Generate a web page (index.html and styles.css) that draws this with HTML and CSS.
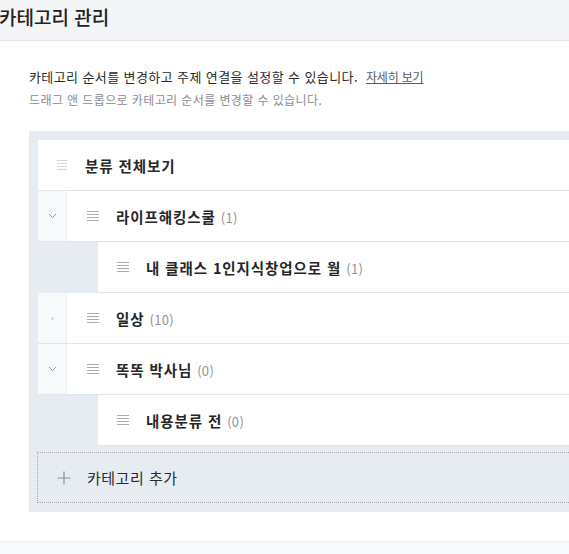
FILE: index.html
```html
<!DOCTYPE html>
<html lang="ko">
<head>
    <meta charset="UTF-8">
    <meta name="viewport" content="width=device-width, initial-scale=1.0">
    <title>카테고리 관리</title>
    <link rel="stylesheet" href="styles.css">
</head>
<body>
    <header class="page-head">
        <h1>카테고리 관리</h1>
    </header>

    <section class="intro">
        <p class="intro-main">카테고리 순서를 변경하고 주제 연결을 설정할 수 있습니다. <a href="#" class="more">자세히 보기</a></p>
        <p class="intro-sub">드래그 앤 드롭으로 카테고리 순서를 변경할 수 있습니다.</p>
    </section>

    <div class="board">
        <ul class="cat-list">
            <li class="cat-row is-root">
                <span class="drag is-off"><i></i><i></i><i></i><i></i></span>
                <span class="cat-name">분류 전체보기</span>
            </li>
            <li class="cat-row">
                <span class="toggle">
                    <svg width="9" height="6" viewBox="0 0 9 6"><polyline points="1,1 4.5,4.5 8,1" fill="none" stroke="#9a9fa6" stroke-width="1"/></svg>
                </span>
                <span class="drag"><i></i><i></i><i></i><i></i></span>
                <span class="cat-name">라이프해킹스쿨<em>(1)</em></span>
            </li>
            <li class="cat-row is-child">
                <span class="drag"><i></i><i></i><i></i><i></i></span>
                <span class="cat-name">내 클래스 1인지식창업으로 월<em>(1)</em></span>
            </li>
            <li class="cat-row">
                <span class="toggle"><b class="dot"></b></span>
                <span class="drag"><i></i><i></i><i></i><i></i></span>
                <span class="cat-name">일상<em>(10)</em></span>
            </li>
            <li class="cat-row">
                <span class="toggle">
                    <svg width="9" height="6" viewBox="0 0 9 6"><polyline points="1,1 4.5,4.5 8,1" fill="none" stroke="#9a9fa6" stroke-width="1"/></svg>
                </span>
                <span class="drag"><i></i><i></i><i></i><i></i></span>
                <span class="cat-name">똑똑 박사님<em>(0)</em></span>
            </li>
            <li class="cat-row is-child">
                <span class="drag"><i></i><i></i><i></i><i></i></span>
                <span class="cat-name">내용분류 전<em>(0)</em></span>
            </li>
        </ul>

        <button class="add-row" type="button">
            <svg width="14" height="14" viewBox="0 0 14 14"><path d="M7 0.5v13M0.5 7h13" stroke="#8c9096" stroke-width="1.2"/></svg>
            <span>카테고리 추가</span>
        </button>
    </div>

    <footer class="page-foot"></footer>
</body>
</html>
```

FILE: styles.css
```css
:root {
    --text: #222222;
    --muted: #8a8d92;
    --line: #e1e5eb;
    --board-bg: #e7ebf2;
}

body {
    margin: 0;
    font-family: "Noto Sans CJK KR", "Noto Sans", sans-serif;
    color: var(--text);
    background: #ffffff;
    overflow: hidden;
}

/* 상단 제목 */
.page-head {
    height: 41px;
    background: #f4f5f7;
    border-bottom: 1px solid #e3e6ec;
    box-sizing: border-box;
}

.page-head h1 {
    margin: 0;
    margin-left: -1px;
    font-size: 19px;
    font-weight: 500;
    line-height: 34px;
    letter-spacing: 0;
}

/* 안내 문구 */
.intro {
    padding: 25px 0 0 29px;
}

.intro p {
    margin: 0;
    letter-spacing: 0.4px;
}

.intro-main {
    font-size: 13px;
    line-height: 22px;
    color: #2b2b2b;
}

.intro-sub {
    margin-top: 1px;
    font-size: 12px;
    line-height: 24px;
    color: var(--muted);
}

.more {
    margin-left: 4px;
    font-size: 12px;
    letter-spacing: -0.2px;
    color: #555a60;
    text-decoration: underline;
}

/* 카테고리 목록 */
.board {
    margin: 19px -40px 0 29px;
    padding: 9px 0 9px 9px;
    background: var(--board-bg);
}

.cat-list {
    list-style: none;
    margin: 0;
    padding: 0;
}

.cat-row {
    display: flex;
    align-items: center;
    height: 51px;
    box-sizing: border-box;
    background: #ffffff;
    border-bottom: 1px solid var(--line);
}

.cat-row.is-root,
.cat-row.is-child {
    padding-left: 19px;
}

.cat-row.is-child {
    margin-left: 60px;
}

.toggle {
    display: flex;
    align-items: center;
    justify-content: center;
    align-self: stretch;
    flex: none;
    width: 28px;
    margin-right: 20px;
    background: #f8f9fb;
    border-right: 1px solid #eceef2;
}

.dot {
    width: 3px;
    height: 3px;
    border-radius: 50%;
    background: #d4d7dc;
}

.drag {
    display: flex;
    flex-direction: column;
    flex: none;
    gap: 2px;
    width: 12px;
    margin-right: 17px;
}

.drag i {
    display: block;
    height: 1px;
    background: #a9acb1;
}

.drag.is-off {
    width: 10px;
    margin-right: 18px;
}

.drag.is-off i {
    background: #d2d5da;
}

.cat-name {
    font-size: 14.5px;
    font-weight: 700;
    letter-spacing: 0.9px;
    white-space: nowrap;
    color: #262626;
}

.cat-name em {
    margin-left: 5px;
    font-style: normal;
    font-weight: 400;
    font-size: 13px;
    letter-spacing: 0.3px;
    color: #8f949b;
}

.add-row {
    display: flex;
    align-items: center;
    width: calc(100% + 1px);
    height: 51px;
    margin: 6px 0 0 -1px;
    padding: 0 0 0 19px;
    border: 1px dotted #a3a7ad;
    background: transparent;
    font-family: inherit;
    font-size: 15px;
    color: #2b2b2b;
    letter-spacing: 0.5px;
    text-align: left;
    box-sizing: border-box;
}

.add-row svg {
    margin-right: 16px;
}

/* 하단 */
.page-foot {
    margin-top: 29px;
    height: 40px;
    background: #f8f9fb;
    border-top: 1px solid #eceef2;
}
```
